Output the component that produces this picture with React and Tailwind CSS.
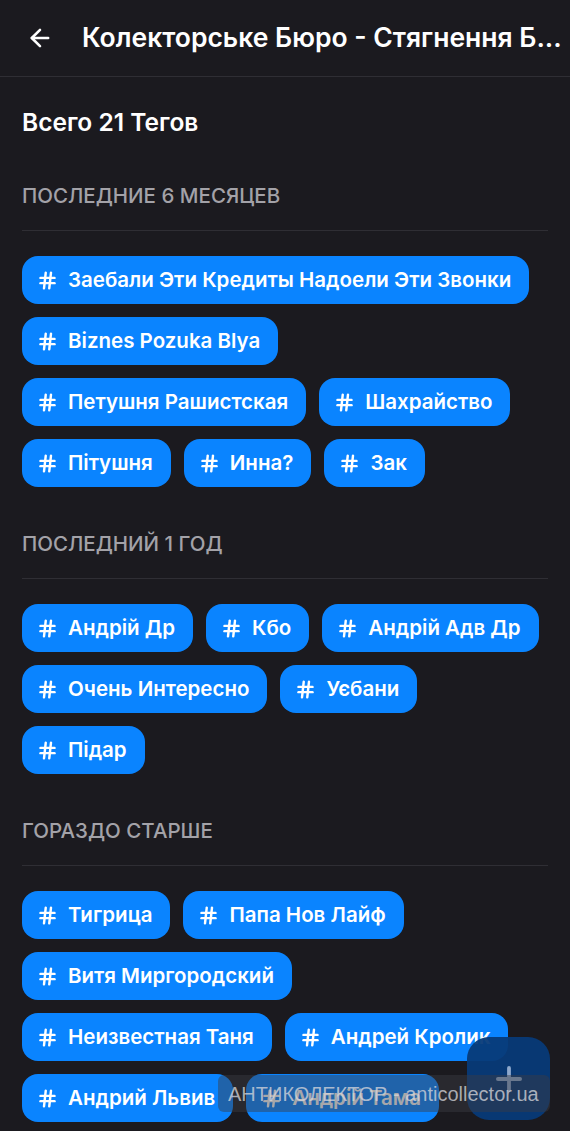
import { ArrowLeft, Hash, Plus } from "lucide-react";

const sections = [
  {
    title: "ПОСЛЕДНИЕ 6 МЕСЯЦЕВ",
    tags: [
      "Заебали Эти Кредиты Надоели Эти Звонки",
      "Biznes Pozuka Blya",
      "Петушня Рашистская",
      "Шахрайство",
      "Пітушня",
      "Инна?",
      "Зак",
    ],
  },
  {
    title: "ПОСЛЕДНИЙ 1 ГОД",
    tags: ["Андрій Др", "Кбо", "Андрій Адв Др", "Очень Интересно", "Уєбани", "Підар"],
  },
  {
    title: "ГОРАЗДО СТАРШЕ",
    tags: [
      "Тигрица",
      "Папа Нов Лайф",
      "Витя Миргородский",
      "Неизвестная Таня",
      "Андрей Кролик",
      "Андрий Львив",
      "Андрій Тама",
    ],
  },
];

function Tag({ label }) {
  return (
    <div className="flex h-12 items-center rounded-[16px] bg-[#0a84ff] pl-[15px] pr-[18px] text-white">
      <Hash size={21} strokeWidth={2.8} className="shrink-0" />
      <span className="ml-[10px] whitespace-nowrap text-[20.5px] font-semibold leading-none">
        {label}
      </span>
    </div>
  );
}

export default function App() {
  return (
    <div
      className="relative h-[1131px] w-full overflow-hidden bg-[#1b1a1f] text-white"
      style={{ fontFamily: "Inter, 'Noto Sans', sans-serif" }}
    >
      <header className="flex h-[77px] items-center border-b border-[#2f2e34] pl-[26px]">
        <ArrowLeft size={28} strokeWidth={2.2} />
        <h1 className="ml-[28px] whitespace-nowrap text-[26.5px] font-semibold">
          Колекторське Бюро - Стягнення Б...
        </h1>
      </header>

      <div className="px-[22px]">
        <h2 className="mt-[31px] text-[24.5px] font-semibold leading-[28px]">Всего 21 Тегов</h2>

        {sections.map((s, i) => (
          <section key={s.title} className={i === 0 ? "mt-[48px]" : "mt-[45px]"}>
            <h3 className="text-[20.5px] font-medium leading-[24px] text-[#a3a2a8]">{s.title}</h3>
            <div className="mt-[22px] h-px bg-[#2f2e34]" />
            <div className="mt-[25px] flex flex-wrap gap-x-[13px] gap-y-[13px]">
              {s.tags.map((t) => (
                <Tag key={t} label={t} />
              ))}
            </div>
          </section>
        ))}
      </div>

      <button className="absolute left-[467px] top-[1037px] flex h-[83px] w-[83px] items-center justify-center rounded-[22px] bg-[#073a78]/95 text-[#8fa9cc]">
        <Plus size={38} strokeWidth={2.4} />
      </button>

      <div
        className="absolute left-[218px] top-[1075px] flex h-[37px] w-[332px] items-center rounded-[6px] bg-[#3c3c42]/45 pl-[10px] text-[20px] text-[#d8d8dc]/75"
        style={{ fontFamily: "'Liberation Sans', Arial, sans-serif" }}
      >
        АНТИКОЛЕКТОР - anticollector.ua
      </div>
    </div>
  );
}
